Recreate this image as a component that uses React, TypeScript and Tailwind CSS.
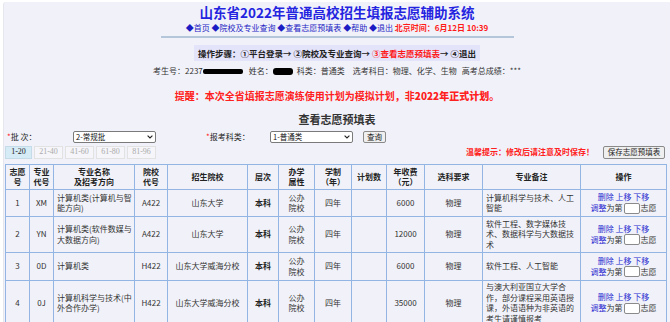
import React from "react";

const cols = [24, 24, 81, 33, 80, 31, 36, 37, 35, 38, 58, 98, 86];

const headers: React.ReactNode[] = [
  <>志愿<br />号</>,
  <>专业<br />代号</>,
  <>专业名称<br />及招考方向</>,
  <>院校<br />代号</>,
  "招生院校",
  "层次",
  <>办学<br />属性</>,
  <>学制<br />（年）</>,
  "计划数",
  <>年收费<br />（元）</>,
  "选科要求",
  "专业备注",
  "操作",
];

const rows = [
  { no: "1", code: "XM", name: "计算机类(计算机与智能方向)", school: "A422", sname: "山东大学", fee: "6000", note: "计算机科学与技术、人工智能", h: "h-[27px]" },
  { no: "2", code: "YN", name: "计算机类(软件数媒与大数据方向)", school: "A422", sname: "山东大学", fee: "12000", note: "软件工程、数字媒体技术、数据科学与大数据技术", h: "h-[36px]" },
  { no: "3", code: "0D", name: "计算机类", school: "H422", sname: "山东大学威海分校", fee: "6000", note: "软件工程、人工智能", h: "h-[28px]" },
  { no: "4", code: "0J", name: "计算机科学与技术(中外合作办学)", school: "H422", sname: "山东大学威海分校", fee: "35000", note: "与澳大利亚国立大学合作，部分课程采用英语授课，外语语种为非英语的考生请谨慎报考", h: "h-[44px]" },
];

const cell = "border border-[#93b5e3] px-[2px] py-[1px] text-center align-middle";

const FakeSelect = ({ value }: { value: string }) => (
  <div className="flex h-[12px] w-[83px] items-center justify-between rounded-[2px] border border-[#7a7a7a] bg-white px-[2px] text-[7.5px] leading-none text-[#111]">
    <span>{value}</span>
    <svg width="6" height="4" viewBox="0 0 6 4">
      <path d="M0.6 0.6 L3 3 L5.4 0.6" fill="none" stroke="#222" strokeWidth="1.1" />
    </svg>
  </div>
);

export default function App() {
  return (
    <div className="h-[322px] w-[670px] overflow-hidden bg-white pl-[3px] pt-[2px] font-['Noto_Sans_CJK_SC',sans-serif] text-[#333]">
      <div className="h-full rounded-tl-[3px] border-l border-[#e6e7ee] bg-[#f1f2f9] pt-[3px]">
        {/* 页头 */}
        <div className="text-center">
          <div className="text-[13.5px] font-bold leading-[14px] text-[#2424e0]">
            山东省2022年普通高校招生填报志愿辅助系统
          </div>
          <div className="mt-[4px] text-[8px] leading-[10px] text-[#1c1cc4]">
            ◆首页 ◆院校及专业查询 ◆查看志愿预填表 ◆帮助 ◆退出{" "}
            <span className="font-bold text-[#ff1a1a]">北京时间：6月12日 10:39</span>
          </div>
          <div className="mx-auto mt-[3px] h-[2px] w-[353px] bg-[#b3c6da]" />
          <div className="mt-[5px] inline-block bg-[#e3e3fa] px-[4px] py-[3px] text-[8.5px] font-bold leading-[10px] text-[#222]">
            操作步骤：①平台登录→ ②院校及专业查询→ <span className="text-[#ff1a1a]">③查看志愿预填表</span>→ ④退出
          </div>
          <div className="mt-[4px] flex items-center justify-center text-[8px] leading-[10px] text-[#333]">
            <span>考生号：2237</span>
            <span className="mr-[6px] h-[5px] w-[40px] rounded-[2px] bg-black" />
            <span>姓名：</span>
            <span className="mr-[4px] h-[7px] w-[20px] rounded-[3px] bg-black" />
            <span>科类：普通类</span>
            <span className="ml-[8px]">选考科目：物理、化学、生物</span>
            <span className="ml-[5px]">高考总成绩：***</span>
          </div>
          <div className="mt-[14px] text-[10px] font-bold leading-[12px] text-[#ff2020]">
            提醒：本次全省填报志愿演练使用计划为模拟计划，非<span className="font-black">2022年正式计划</span>。
          </div>
          <div className="mt-[10px] text-[11px] font-semibold leading-[14px] text-[#333]">查看志愿预填表</div>
        </div>

        {/* 查询条件 */}
        <div className="mt-[4px] flex h-[13px] items-center pl-[3px] text-[8px] leading-none text-[#222]">
          <span className="w-[66px]">
            <span className="text-[#ff2020]">*</span>批 次：
          </span>
          <FakeSelect value="2-常规批" />
          <span className="ml-[50px] w-[64px]">
            <span className="text-[#ff2020]">*</span>报考科类：
          </span>
          <FakeSelect value="1-普通类" />
          <button className="ml-[10px] h-[12px] rounded-[2px] border border-[#8a8a8a] bg-[#efefef] px-[3px] text-[7.5px] leading-none">
            查询
          </button>
        </div>

        {/* 分页与保存 */}
        <div className="mt-[2px] flex h-[14px] items-center justify-between pl-[1px] pr-[5px]">
          <div className="flex gap-[2px] font-['Liberation_Serif',serif] text-[8px] leading-none">
            <span className="flex h-[13px] w-[27px] items-center justify-center border border-[#c6dbe8] bg-[#d5ebf6] text-[#222]">1-20</span>
            {["21-40", "41-60", "61-80", "81-96"].map((t) => (
              <span key={t} className="flex h-[13px] w-[29px] items-center justify-center border border-[#e2e2e2] bg-[#f6f6fa] text-[#aaa]">
                {t}
              </span>
            ))}
          </div>
          <div className="flex items-center">
            <span className="text-[8px] font-bold leading-none text-[#ff2020]">温馨提示：修改后请注意及时保存！</span>
            <button className="ml-[9px] h-[13px] w-[62px] rounded-[2px] border border-[#8a8a8a] bg-[#efefef] text-[7.5px] leading-none text-[#222]">
              保存志愿预填表
            </button>
          </div>
        </div>

        {/* 预填表 */}
        <div className="mt-[5px] pl-[1px]">
          <table className="w-[661px] table-fixed border-collapse text-[8px] leading-[10.5px]">
            <colgroup>
              {cols.map((w, i) => (
                <col key={i} style={{ width: w }} />
              ))}
            </colgroup>
            <thead>
              <tr className="h-[25px]">
                {headers.map((h, i) => (
                  <th key={i} className={`${cell} font-bold text-[#222]`}>
                    {h}
                  </th>
                ))}
              </tr>
            </thead>
            <tbody>
              {rows.map((r) => (
                <tr key={r.no} className={r.h}>
                  <td className={cell}>{r.no}</td>
                  <td className={cell}>{r.code}</td>
                  <td className={`${cell} pl-[3px] text-left`}>{r.name}</td>
                  <td className={cell}>{r.school}</td>
                  <td className={cell}>{r.sname}</td>
                  <td className={`${cell} font-bold text-[#222]`}>本科</td>
                  <td className={cell}>
                    公办<br />院校
                  </td>
                  <td className={cell}>四年</td>
                  <td className={cell}></td>
                  <td className={cell}>{r.fee}</td>
                  <td className={cell}>物理</td>
                  <td className={`${cell} pl-[3px] text-left`}>{r.note}</td>
                  <td className={cell}>
                    <div className="text-[#2b2bd0]">删除 上移 下移</div>
                    <div className="flex items-center justify-center">
                      <span className="text-[#2b2bd0]">调整</span>
                      <span>为第</span>
                      <span className="mx-[1px] inline-block h-[11px] w-[16px] rounded-[2px] border border-[#8a8a8a] bg-white" />
                      <span>志愿</span>
                    </div>
                  </td>
                </tr>
              ))}
            </tbody>
          </table>
        </div>
      </div>
    </div>
  );
}
